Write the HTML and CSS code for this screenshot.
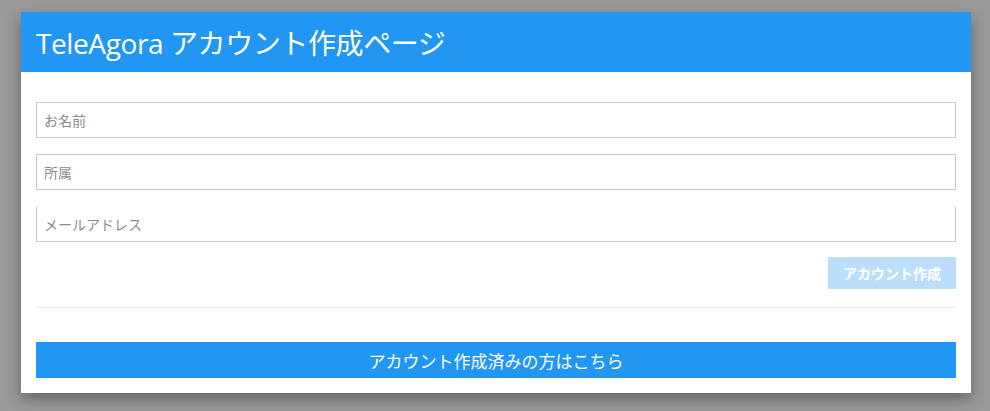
FILE: index.html
```html
<!DOCTYPE html>
<html lang="ja">
<head>
    <meta charset="UTF-8">
    <meta name="viewport" content="width=device-width, initial-scale=1.0">
    <title>TeleAgora アカウント作成ページ</title>
    <link rel="stylesheet" href="styles.css">
</head>
<body>

<div class="dialog">
    <header class="dialog-header">
        <h1>TeleAgora アカウント作成ページ</h1>
    </header>

    <div class="dialog-body">
        <form id="signupForm">
            <input type="text" class="field" placeholder="お名前">
            <input type="text" class="field" placeholder="所属">
            <input type="text" class="field field-open" placeholder="メールアドレス">
            <div class="actions">
                <button type="submit" class="create-button" disabled>アカウント作成</button>
            </div>
        </form>

        <hr class="divider">

        <button type="button" class="login-button">アカウント作成済みの方はこちら</button>
    </div>
</div>

</body>
</html>
```

FILE: styles.css
```css
body {
    font-family: "Noto Sans CJK JP", "Open Sans", sans-serif;
    margin: 0;
    padding: 12px 19px 18px 21px;
    background-color: #9a9a9a;
}
.dialog {
    background-color: white;
    box-shadow: 0 6px 14px rgba(0, 0, 0, 0.35);
}
.dialog-header {
    background-color: #2196f3;
    color: white;
    height: 60px;
    display: flex;
    align-items: center;
    padding: 0 15px;
}
.dialog-header h1 {
    margin: 0;
    font-family: "Open Sans", "Noto Sans CJK JP", sans-serif;
    font-weight: 400;
    font-size: 28px;
    letter-spacing: -0.4px;
}
.dialog-body {
    padding: 30px 15px 15px 15px;
}
#signupForm {
    display: flex;
    flex-direction: column;
    gap: 16px;
}
.field {
    box-sizing: border-box;
    width: 100%;
    height: 36px;
    padding: 0 7px;
    border: 1px solid #c8c8c8;
    font-family: "Noto Sans CJK JP", sans-serif;
    font-size: 14px;
    outline: none;
}
.field::placeholder {
    color: #8c8c8c;
}
.field-open {
    border-top-color: transparent;
}
.actions {
    display: flex;
    justify-content: flex-end;
    margin-top: -1px;
}
.create-button {
    background-color: #bbdefb;
    color: white;
    border: none;
    height: 32px;
    padding: 0 15px;
    font-family: "Noto Sans CJK JP", sans-serif;
    font-size: 14px;
    font-weight: 700;
}
.divider {
    border: none;
    border-top: 1px solid #ececec;
    margin: 18px 0 34px 0;
}
.login-button {
    display: block;
    width: 100%;
    height: 36px;
    background-color: #2196f3;
    color: white;
    border: none;
    font-family: "Noto Sans CJK JP", sans-serif;
    font-size: 17px;
    cursor: pointer;
}
```
